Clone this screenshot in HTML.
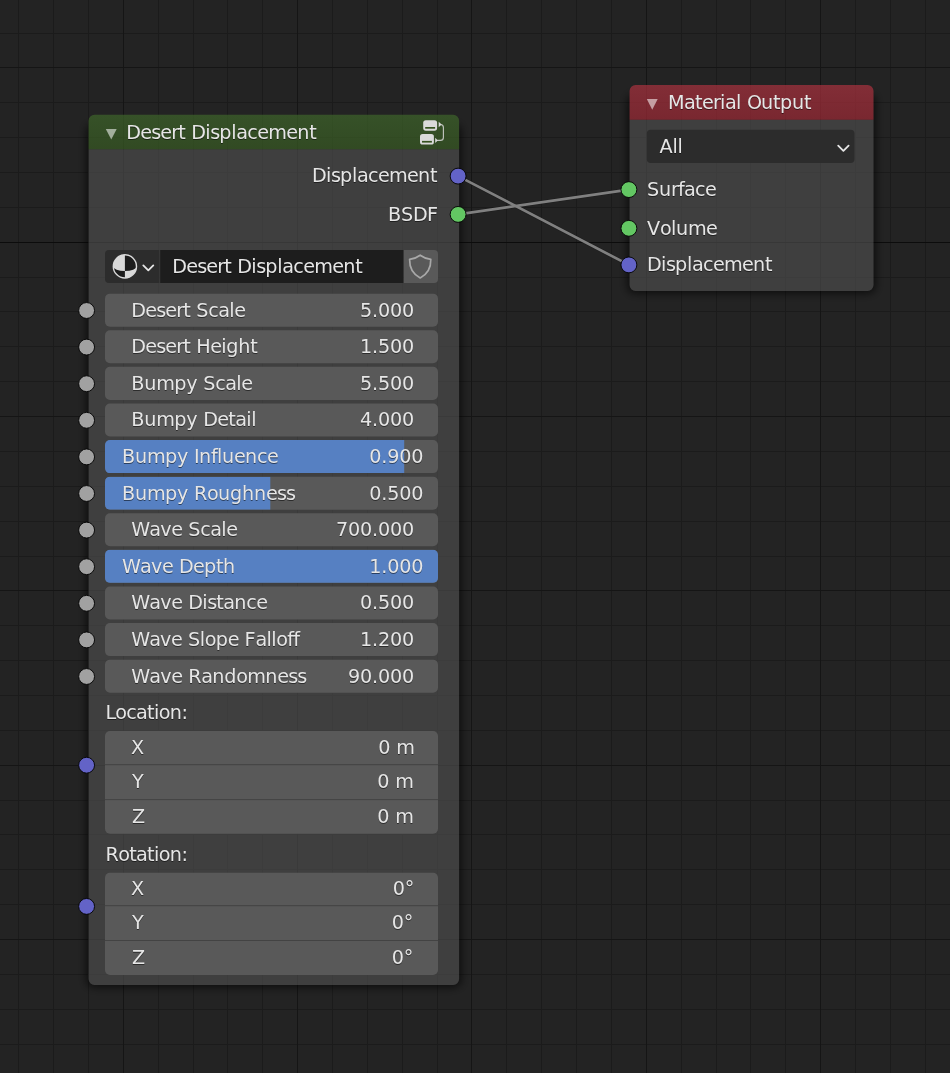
<!DOCTYPE html>
<html><head><meta charset="utf-8"><title>Node Editor</title>
<style>
html,body{margin:0;padding:0;background:#232323;}
body{width:950px;height:1073px;position:relative;overflow:hidden;font-family:"DejaVu Sans","Liberation Sans",sans-serif;font-size:18px;}
svg{position:absolute;left:0;top:0;display:block;}
text{white-space:pre;}
</style></head>
<body>
<svg width="950" height="1073" viewBox="0 0 950 1073">
<defs><filter id="ts" x="0" y="0" width="100%" height="100%" filterUnits="userSpaceOnUse" color-interpolation-filters="sRGB"><feDropShadow dx="0" dy="1" stdDeviation="0.6" flood-color="#000" flood-opacity="0.5"/></filter><filter id="sh" x="-20%" y="-20%" width="140%" height="140%"><feGaussianBlur stdDeviation="4.5"/></filter></defs>
<rect width="950" height="1073" fill="#232323"/>
<path d="M0 33.5H950M0 102.5H950M18.5 0V1073M0 137.5H950M53.5 0V1073M0 172.5H950M88.5 0V1073M0 207.5H950M158.5 0V1073M0 277.5H950M193.5 0V1073M0 311.5H950M227.5 0V1073M0 346.5H950M262.5 0V1073M0 381.5H950M332.5 0V1073M0 451.5H950M367.5 0V1073M0 486.5H950M402.5 0V1073M0 521.5H950M437.5 0V1073M0 556.5H950M506.5 0V1073M0 625.5H950M541.5 0V1073M0 660.5H950M576.5 0V1073M0 695.5H950M611.5 0V1073M0 730.5H950M681.5 0V1073M0 800.5H950M716.5 0V1073M0 834.5H950M750.5 0V1073M0 869.5H950M785.5 0V1073M0 904.5H950M855.5 0V1073M0 974.5H950M890.5 0V1073M0 1009.5H950M925.5 0V1073M0 1044.5H950" stroke="#1b1b1b" stroke-width="1" fill="none" shape-rendering="crispEdges"/>
<path d="M0 67.5H950M123.5 0V1073M0 242.5H950M297.5 0V1073M0 416.5H950M471.5 0V1073M0 590.5H950M646.5 0V1073M0 765.5H950M820.5 0V1073M0 939.5H950" stroke="#151515" stroke-width="1" fill="none" shape-rendering="crispEdges"/>
<path d="M0 242.5H950" stroke="#0c0c0c" stroke-width="1" fill="none" shape-rendering="crispEdges"/>
<clipPath id="nc1"><path clip-rule="evenodd" d="M0 0H950V1073H0Z M94.55 114.7H453.1A6 6 0 0 1 459.1 120.7V978.9A6 6 0 0 1 453.1 984.9H94.55A6 6 0 0 1 88.55 978.9V120.7A6 6 0 0 1 94.55 114.7Z"/></clipPath>
<g clip-path="url(#nc1)"><rect x="86.05" y="123.7" width="375.55" height="863.70" rx="8" fill="rgba(0,0,0,0.62)" filter="url(#sh)"/></g>
<path d="M88.55 149.3H459.1V978.9A6 6 0 0 1 453.1 984.9H94.55A6 6 0 0 1 88.55 978.9V149.3Z" fill="rgba(77,77,77,0.68)" />
<linearGradient id="hg1" x1="0" y1="0" x2="0" y2="1"><stop offset="0" stop-color="rgb(62,101,42)" stop-opacity="0.7"/><stop offset="1" stop-color="rgb(56,91,35)" stop-opacity="0.7"/></linearGradient>
<path d="M94.55 114.7H453.1A6 6 0 0 1 459.1 120.7V149.3H88.55V120.7A6 6 0 0 1 94.55 114.7Z" fill="url(#hg1)" />
<path d="M105.8 128.9H116.7L111.25 139.6Z" fill="rgba(255,255,255,0.55)"/>
<path d="M109 250H159.4V283H109A4 4 0 0 1 105 279V254A4 4 0 0 1 109 250Z" fill="#2c2c2c" />
<path d="M160.2 250H403.2V283H160.2V250Z" fill="#1d1d1d" />
<path d="M404 250H434A4 4 0 0 1 438 254V279A4 4 0 0 1 434 283H404V250Z" fill="#595959" />
<path d="M110 293.65H433A5 5 0 0 1 438 298.65V321.7A5 5 0 0 1 433 326.7H110A5 5 0 0 1 105 321.7V298.65A5 5 0 0 1 110 293.65Z" fill="#595959" />
<circle cx="86.6" cy="310.5" r="7.95" fill="#a1a1a1" stroke="#050505" stroke-width="0.95"/>
<path d="M110 330.25H433A5 5 0 0 1 438 335.25V358.3A5 5 0 0 1 433 363.3H110A5 5 0 0 1 105 358.3V335.25A5 5 0 0 1 110 330.25Z" fill="#595959" />
<circle cx="86.6" cy="347.1" r="7.95" fill="#a1a1a1" stroke="#050505" stroke-width="0.95"/>
<path d="M110 366.84999999999997H433A5 5 0 0 1 438 371.84999999999997V394.9A5 5 0 0 1 433 399.9H110A5 5 0 0 1 105 394.9V371.84999999999997A5 5 0 0 1 110 366.84999999999997Z" fill="#595959" />
<circle cx="86.6" cy="383.7" r="7.95" fill="#a1a1a1" stroke="#050505" stroke-width="0.95"/>
<path d="M110 403.45H433A5 5 0 0 1 438 408.45V431.5A5 5 0 0 1 433 436.5H110A5 5 0 0 1 105 431.5V408.45A5 5 0 0 1 110 403.45Z" fill="#595959" />
<circle cx="86.6" cy="420.3" r="7.95" fill="#a1a1a1" stroke="#050505" stroke-width="0.95"/>
<path d="M110 440.04999999999995H433A5 5 0 0 1 438 445.04999999999995V468.09999999999997A5 5 0 0 1 433 473.09999999999997H110A5 5 0 0 1 105 468.09999999999997V445.04999999999995A5 5 0 0 1 110 440.04999999999995Z" fill="#595959" />
<clipPath id="c4"><rect x="105" y="440.04999999999995" width="299.2" height="33"/></clipPath>
<path d="M110 440.04999999999995H433A5 5 0 0 1 438 445.04999999999995V468.09999999999997A5 5 0 0 1 433 473.09999999999997H110A5 5 0 0 1 105 468.09999999999997V445.04999999999995A5 5 0 0 1 110 440.04999999999995Z" fill="#5680c2" clip-path="url(#c4)"/>
<circle cx="86.6" cy="456.9" r="7.95" fill="#a1a1a1" stroke="#050505" stroke-width="0.95"/>
<path d="M110 476.65H433A5 5 0 0 1 438 481.65V504.7A5 5 0 0 1 433 509.7H110A5 5 0 0 1 105 504.7V481.65A5 5 0 0 1 110 476.65Z" fill="#595959" />
<clipPath id="c5"><rect x="105" y="476.65" width="165.3" height="33"/></clipPath>
<path d="M110 476.65H433A5 5 0 0 1 438 481.65V504.7A5 5 0 0 1 433 509.7H110A5 5 0 0 1 105 504.7V481.65A5 5 0 0 1 110 476.65Z" fill="#5680c2" clip-path="url(#c5)"/>
<circle cx="86.6" cy="493.5" r="7.95" fill="#a1a1a1" stroke="#050505" stroke-width="0.95"/>
<path d="M110 513.25H433A5 5 0 0 1 438 518.25V541.3A5 5 0 0 1 433 546.3H110A5 5 0 0 1 105 541.3V518.25A5 5 0 0 1 110 513.25Z" fill="#595959" />
<circle cx="86.6" cy="530.1" r="7.95" fill="#a1a1a1" stroke="#050505" stroke-width="0.95"/>
<path d="M110 549.8499999999999H433A5 5 0 0 1 438 554.8499999999999V577.8999999999999A5 5 0 0 1 433 582.8999999999999H110A5 5 0 0 1 105 577.8999999999999V554.8499999999999A5 5 0 0 1 110 549.8499999999999Z" fill="#595959" />
<clipPath id="c7"><rect x="105" y="549.8499999999999" width="340.0" height="33"/></clipPath>
<path d="M110 549.8499999999999H433A5 5 0 0 1 438 554.8499999999999V577.8999999999999A5 5 0 0 1 433 582.8999999999999H110A5 5 0 0 1 105 577.8999999999999V554.8499999999999A5 5 0 0 1 110 549.8499999999999Z" fill="#5680c2" clip-path="url(#c7)"/>
<circle cx="86.6" cy="566.7" r="7.95" fill="#a1a1a1" stroke="#050505" stroke-width="0.95"/>
<path d="M110 586.45H433A5 5 0 0 1 438 591.45V614.5A5 5 0 0 1 433 619.5H110A5 5 0 0 1 105 614.5V591.45A5 5 0 0 1 110 586.45Z" fill="#595959" />
<circle cx="86.6" cy="603.3" r="7.95" fill="#a1a1a1" stroke="#050505" stroke-width="0.95"/>
<path d="M110 623.05H433A5 5 0 0 1 438 628.05V651.0999999999999A5 5 0 0 1 433 656.0999999999999H110A5 5 0 0 1 105 651.0999999999999V628.05A5 5 0 0 1 110 623.05Z" fill="#595959" />
<circle cx="86.6" cy="639.9000000000001" r="7.95" fill="#a1a1a1" stroke="#050505" stroke-width="0.95"/>
<path d="M110 659.65H433A5 5 0 0 1 438 664.65V687.6999999999999A5 5 0 0 1 433 692.6999999999999H110A5 5 0 0 1 105 687.6999999999999V664.65A5 5 0 0 1 110 659.65Z" fill="#595959" />
<circle cx="86.6" cy="676.5" r="7.95" fill="#a1a1a1" stroke="#050505" stroke-width="0.95"/>
<path d="M110 731.1H433A5 5 0 0 1 438 736.1V828.7A5 5 0 0 1 433 833.7H110A5 5 0 0 1 105 828.7V736.1A5 5 0 0 1 110 731.1Z" fill="#595959" />
<rect x="105" y="764.2" width="333" height="1" fill="#434343"/>
<rect x="105" y="799.1" width="333" height="1" fill="#434343"/>
<circle cx="86.6" cy="765.2" r="7.95" fill="#6363c7" stroke="#050505" stroke-width="0.95"/>
<path d="M110 872.8H433A5 5 0 0 1 438 877.8V969.9A5 5 0 0 1 433 974.9H110A5 5 0 0 1 105 969.9V877.8A5 5 0 0 1 110 872.8Z" fill="#595959" />
<rect x="105" y="905.2" width="333" height="1" fill="#434343"/>
<rect x="105" y="940.0" width="333" height="1" fill="#434343"/>
<circle cx="86.6" cy="906.4" r="7.95" fill="#6363c7" stroke="#050505" stroke-width="0.95"/>
<clipPath id="nc2"><path clip-rule="evenodd" d="M0 0H950V1073H0Z M635.6 85H867.5A6 6 0 0 1 873.5 91V285A6 6 0 0 1 867.5 291H635.6A6 6 0 0 1 629.6 285V91A6 6 0 0 1 635.6 85Z"/></clipPath>
<g clip-path="url(#nc2)"><rect x="627.10" y="94" width="248.90" height="199.50" rx="8" fill="rgba(0,0,0,0.62)" filter="url(#sh)"/></g>
<path d="M629.6 119.8H873.5V285A6 6 0 0 1 867.5 291H635.6A6 6 0 0 1 629.6 285V119.8Z" fill="rgba(77,77,77,0.68)" />
<linearGradient id="hg2" x1="0" y1="0" x2="0" y2="1"><stop offset="0" stop-color="rgb(171,50,63)" stop-opacity="0.7"/><stop offset="1" stop-color="rgb(158,41,53)" stop-opacity="0.7"/></linearGradient>
<path d="M635.6 85H867.5A6 6 0 0 1 873.5 91V119.8H629.6V91A6 6 0 0 1 635.6 85Z" fill="url(#hg2)" />
<path d="M646.8 99H657.7L652.25 109.7Z" fill="rgba(255,255,255,0.55)"/>
<path d="M650.8 129.7H850.5A4 4 0 0 1 854.5 133.7V159.1A4 4 0 0 1 850.5 163.1H650.8A4 4 0 0 1 646.8 159.1V133.7A4 4 0 0 1 650.8 129.7Z" fill="#2c2c2c" />
<path d="M838.2 145.6L843.4 150.8L848.6 145.6" fill="none" stroke="#e6e6e6" stroke-width="1.8" stroke-linecap="round" stroke-linejoin="round"/>
<path d="M458.1 176.1L628.9 264.9" stroke="#111" stroke-width="3.8" stroke-opacity="0.35" fill="none"/>
<path d="M458.1 214.4L628.9 189.6" stroke="#111" stroke-width="3.8" stroke-opacity="0.35" fill="none"/>
<path d="M458.1 176.1L628.9 264.9" stroke="#808080" stroke-width="2.7" fill="none"/>
<path d="M458.1 214.4L628.9 189.6" stroke="#808080" stroke-width="2.7" fill="none"/>
<circle cx="458.1" cy="176.1" r="7.95" fill="#6363c7" stroke="#050505" stroke-width="0.95"/>
<circle cx="458.1" cy="214.4" r="7.95" fill="#63c763" stroke="#050505" stroke-width="0.95"/>
<circle cx="628.9" cy="189.6" r="7.95" fill="#63c763" stroke="#050505" stroke-width="0.95"/>
<circle cx="628.9" cy="228.3" r="7.95" fill="#63c763" stroke="#050505" stroke-width="0.95"/>
<circle cx="628.9" cy="264.9" r="7.95" fill="#6363c7" stroke="#050505" stroke-width="0.95"/>
<g fill="#d9d9d9">
<rect x="423.2" y="120.2" width="13.9" height="10.5" rx="2.6"/>
<rect x="420" y="134.1" width="13.9" height="10.5" rx="2.6"/>
</g>
<rect x="425.2" y="127" width="9.9" height="1.7" fill="#35521f"/>
<rect x="422" y="140.9" width="9.9" height="1.7" fill="#35521f"/>
<path d="M440.6 124.5Q443.4 124.6 443.4 127.6V137.4Q443.4 140.4 440.4 140.4H437" fill="none" stroke="#d9d9d9" stroke-width="1.15" stroke-opacity="0.85"/>
<path d="M438.7 121.7L441.6 124.5L438.7 127.3Z M435.2 137.7L437.8 140.4L435.2 143.1Z" fill="#d9d9d9"/>
<circle cx="124.9" cy="266.4" r="11.6" fill="#1c1c1c" stroke="#d9d9d9" stroke-width="1.4"/>
<path d="M124.9 254.8A11.6 11.6 0 0 0 113.3 266.8A11.6 4.2 0 0 0 124.9 271Z" fill="#d9d9d9"/>
<path d="M124.9 271A11.6 4.2 0 0 0 136.5 266.8A11.6 11.6 0 0 1 124.9 278Z" fill="#d9d9d9"/>
<path d="M143.3 265.4L148.3 270.4L153.3 265.4" fill="none" stroke="#e6e6e6" stroke-width="1.8" stroke-linecap="round" stroke-linejoin="round"/>
<path d="M420.2 255.2C417 257.6 413.5 258.8 409.6 259.3C409.4 268 412.5 274 420.2 278C427.9 274 431 268 430.8 259.3C426.9 258.8 423.4 257.6 420.2 255.2Z" fill="none" stroke="#a8a8a8" stroke-width="1.7" stroke-linejoin="round"/>
<g id="labels" filter="url(#ts)" font-size="19.2" font-family="'DejaVu Sans','Liberation Sans',sans-serif" style="font-kerning:none" >
<text x="126.19 140.19 151.19 160.19 171.19 178.19 185.19 191.19 205.19 210.19 219.19 231.19 236.19 247.19 257.19 268.19 286.19 297.19 309.19" y="139" fill="#e6e6e6">Desert Displacement</text>
<text x="311.93 325.93 330.93 339.93 351.93 356.93 367.93 377.93 388.93 406.93 417.93 429.93" y="182" fill="#e6e6e6">Displacement</text>
<text x="388.07 401.07 413.07 427.07" y="221" fill="#e6e6e6">BSDF</text>
<text x="172.19 186.19 197.19 206.19 217.19 224.19 231.19 237.19 251.19 256.19 265.19 277.19 282.19 293.19 303.19 314.19 332.19 343.19 355.19" y="273" fill="#e6e6e6">Desert Displacement</text>
<text x="131.19 145.19 156.19 165.19 176.19 183.19 190.19 196.19 208.19 218.19 229.19 234.19" y="317" fill="#e6e6e6">Desert Scale</text>
<text x="359.96 371.96 377.96 389.96 401.96" y="317" fill="#e6e6e6">5.000</text>
<text x="131.19 145.19 156.19 165.19 176.19 183.19 190.19 196.19 210.19 221.19 226.19 238.19 250.19" y="353" fill="#e6e6e6">Desert Height</text>
<text x="359.96 371.96 377.96 389.96 401.96" y="353" fill="#e6e6e6">1.500</text>
<text x="131.19 144.19 156.19 174.19 186.19 197.19 203.19 215.19 225.19 236.19 241.19" y="390" fill="#e6e6e6">Bumpy Scale</text>
<text x="359.96 371.96 377.96 389.96 401.96" y="390" fill="#e6e6e6">5.500</text>
<text x="131.19 144.19 156.19 174.19 186.19 197.19 203.19 217.19 228.19 235.19 246.19 251.19" y="426" fill="#e6e6e6">Bumpy Detail</text>
<text x="359.96 371.96 377.96 389.96 401.96" y="426" fill="#e6e6e6">4.000</text>
<text x="121.99 134.99 146.99 164.99 176.99 187.99 193.99 198.99 210.99 216.99 221.99 233.99 244.99 256.99 266.99" y="463" fill="#e6e6e6">Bumpy Influence</text>
<text x="369.16 381.16 387.16 399.16 411.16" y="463" fill="#e6e6e6">0.900</text>
<text x="121.99 134.99 146.99 164.99 176.99 187.99 193.99 206.99 217.99 229.99 241.99 253.99 265.99 276.99 285.99" y="500" fill="#e6e6e6">Bumpy Roughness</text>
<text x="369.16 381.16 387.16 399.16 411.16" y="500" fill="#e6e6e6">0.500</text>
<text x="131.19 149.19 160.19 171.19 182.19 188.19 200.19 210.19 221.19 226.19" y="536" fill="#e6e6e6">Wave Scale</text>
<text x="335.96 347.96 359.96 371.96 377.96 389.96 401.96" y="536" fill="#e6e6e6">700.000</text>
<text x="121.99 139.99 150.99 161.99 172.99 178.99 192.99 203.99 215.99 222.99" y="573" fill="#e6e6e6">Wave Depth</text>
<text x="369.16 381.16 387.16 399.16 411.16" y="573" fill="#e6e6e6">1.000</text>
<text x="131.19 149.19 160.19 171.19 182.19 188.19 202.19 207.19 216.19 223.19 234.19 246.19 256.19" y="609" fill="#e6e6e6">Wave Distance</text>
<text x="359.96 371.96 377.96 389.96 401.96" y="609" fill="#e6e6e6">0.500</text>
<text x="131.19 149.13 160.07 171.01 181.95 187.89 199.84 204.78 215.72 227.66 238.6 244.54 255.48 266.42 271.37 276.31 287.25 293.19" y="646" fill="#e6e6e6">Wave Slope Falloff</text>
<text x="359.96 371.96 377.96 389.96 401.96" y="646" fill="#e6e6e6">1.200</text>
<text x="131.19 149.19 160.19 171.19 182.19 188.19 201.19 212.19 224.19 236.19 247.19 265.19 277.19 288.19 297.19" y="683" fill="#e6e6e6">Wave Randomness</text>
<text x="347.96 359.96 371.96 377.96 389.96 401.96" y="683" fill="#e6e6e6">90.000</text>
<text x="105.39 115.29 126.19 136.09 146.99 153.89 158.79 169.69 181.59" y="719" fill="#e6e6e6">Location:</text>
<text x="130.99" y="753.8" fill="#e6e6e6">X</text>
<text x="378.23 390.23 396.23" y="753.8" fill="#e6e6e6">0 m</text>
<text x="131.99" y="788.35" fill="#e6e6e6">Y</text>
<text x="377.23 389.23 395.23" y="788.35" fill="#e6e6e6">0 m</text>
<text x="131.99" y="822.9" fill="#e6e6e6">Z</text>
<text x="377.23 389.23 395.23" y="822.9" fill="#e6e6e6">0 m</text>
<text x="105.39 118.29 129.19 136.09 146.99 153.89 158.79 169.69 181.59" y="861" fill="#e6e6e6">Rotation:</text>
<text x="130.99" y="895.4" fill="#e6e6e6">X</text>
<text x="392.83 404.83" y="895.4" fill="#e6e6e6">0°</text>
<text x="131.99" y="929.3" fill="#e6e6e6">Y</text>
<text x="391.83 403.83" y="929.3" fill="#e6e6e6">0°</text>
<text x="131.99" y="963.9" fill="#e6e6e6">Z</text>
<text x="391.83 403.83" y="963.9" fill="#e6e6e6">0°</text>
<text x="667.89 683.89 694.89 701.89 712.89 719.89 724.89 735.89 740.89 746.89 760.89 772.89 779.89 791.89 803.89" y="109" fill="#e6e6e6">Material Output</text>
<text x="659.49 672.49 677.49" y="153" fill="#e6e6e6">All</text>
<text x="646.99 658.99 670.99 677.99 683.99 694.99 704.99" y="196" fill="#e6e6e6">Surface</text>
<text x="646.99 659.99 670.99 675.99 687.99 705.99" y="235" fill="#e6e6e6">Volume</text>
<text x="646.99 660.99 665.99 674.99 686.99 691.99 702.99 712.99 723.99 741.99 752.99 764.99" y="271" fill="#e6e6e6">Displacement</text>
</g>
</svg>
</body></html>
